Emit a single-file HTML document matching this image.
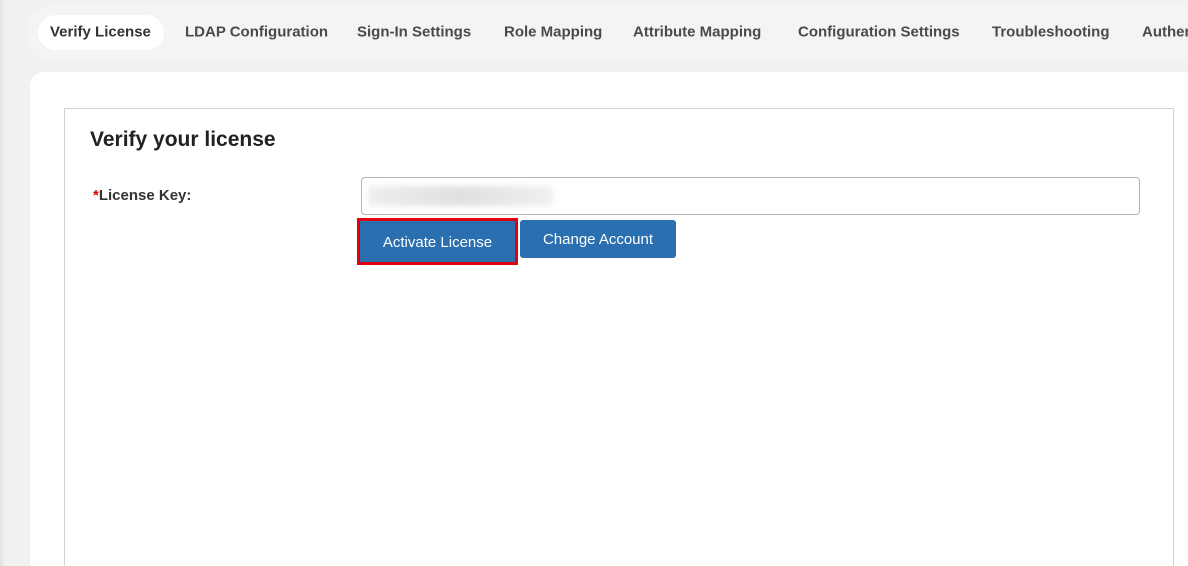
<!DOCTYPE html>
<html><head><style>
html,body{margin:0;width:1188px;height:566px;overflow:hidden}
body{background:#f1f1f1;font-family:"Liberation Sans",sans-serif;position:relative}
.tabs{position:absolute;left:28px;top:6px;width:1160px;height:54px;background:#f4f4f4;border-radius:20px 0 0 20px}
.tab{position:absolute;top:32px;transform:translateY(-50%);font-size:15px;font-weight:bold;color:#4a4a4a;white-space:nowrap}
.active{position:absolute;left:38px;top:15px;width:126px;height:35px;background:#fff;border-radius:18px}
.card{position:absolute;left:30px;top:72px;width:1158px;height:494px;background:#fff;border-radius:14px 0 0 0}
.box{position:absolute;left:64px;top:108px;width:1108px;height:457px;border:1px solid #d2d2d2;border-bottom:none}
h1{position:absolute;left:90px;top:128px;margin:0;font-size:21px;font-weight:bold;color:#222}
.lab{position:absolute;left:93px;top:187px;font-size:15px;font-weight:bold;color:#333}
.inp{position:absolute;left:361px;top:177px;width:777px;height:36px;border:1px solid #b5b5b5;border-radius:4px;background:#fff}
.blur{position:absolute;left:6px;top:8px;width:185px;height:20px;background:linear-gradient(90deg,#eee,#e0e0e0,#f0f0f0);filter:blur(3px)}
.btn{position:absolute;top:220px;height:38px;background:#2a6fb0;color:#fff;font-size:15px;border-radius:3px;line-height:40px;text-align:center;box-sizing:border-box}
</style></head><body>
<div style="position:absolute;left:0;top:0;width:3px;height:566px;background:#e6e6e6"></div>
<div class="tabs"></div>
<div class="active"></div>
<div class="tab" style="left:50px;color:#333">Verify License</div>
<div class="tab" style="left:185px">LDAP Configuration</div>
<div class="tab" style="left:357px">Sign-In Settings</div>
<div class="tab" style="left:504px">Role Mapping</div>
<div class="tab" style="left:633px">Attribute Mapping</div>
<div class="tab" style="left:798px">Configuration Settings</div>
<div class="tab" style="left:992px">Troubleshooting</div>
<div class="tab" style="left:1142px">Authentication</div>
<div class="card"></div>
<div class="box"></div>
<h1>Verify your license</h1>
<div class="lab"><span style="color:#d00">*</span>License Key:</div>
<div class="inp"><div class="blur"></div></div>
<div class="btn" style="left:357px;width:161px;top:218px;height:47px;line-height:43px;border:3px solid #e00010;border-radius:0">Activate License</div>
<div class="btn" style="left:520px;width:156px">Change Account</div>
</body></html>
